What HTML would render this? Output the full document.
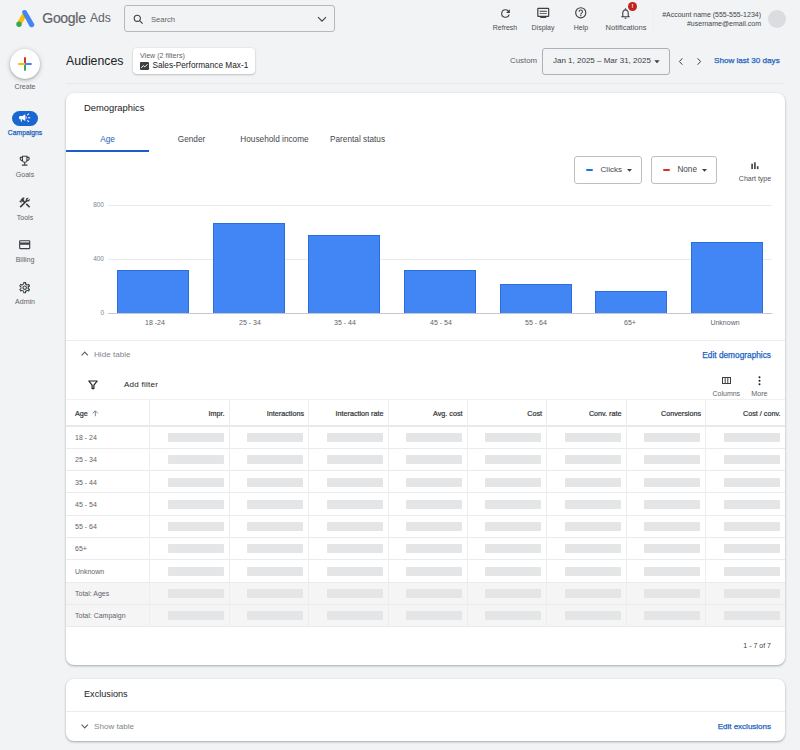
<!DOCTYPE html>
<html lang="en">
<head>
<meta charset="utf-8">
<title>Audiences - Google Ads</title>
<style>
*{box-sizing:border-box;margin:0;padding:0}
html,body{width:800px;height:750px;overflow:hidden}
body{background:#f1f3f4;font-family:"Liberation Sans",Arial,sans-serif;color:#3c4043;position:relative;font-size:8px}
.abs{position:absolute}
.med{font-weight:normal;-webkit-text-stroke:.25px currentColor}
.t{position:absolute;white-space:nowrap;line-height:1}
svg{position:absolute;overflow:visible}
.card{position:absolute;background:#fff;border-radius:8px;box-shadow:0 1px 2px rgba(60,64,67,.3),0 1px 3px rgba(60,64,67,.14)}
.navlbl{position:absolute;left:0;width:50px;text-align:center;font-size:7px;color:#5f6368;line-height:1}
.toplbl{position:absolute;font-size:7px;color:#4d5156;line-height:1;text-align:center;width:60px}
.btn{position:absolute;border:1px solid #bcbfc3;border-radius:3px;background:#fff}
.hl{position:absolute;height:1px;background:#ebebec}
.vl{position:absolute;width:1px;background:#ededee}
.ph{position:absolute;height:9px;width:56px;background:#e4e5e7;border-radius:1px}
.th{position:absolute;font-size:7.2px;-webkit-text-stroke:.22px currentColor;color:#33373a;line-height:1;white-space:nowrap;text-align:right}
.rl{position:absolute;left:75px;font-size:7px;color:#5f6368;line-height:1;white-space:nowrap}
.xl{position:absolute;font-size:7px;color:#5f6368;line-height:1;width:72px;text-align:center}
.bar{position:absolute;background:#4285f4;border:1px solid #2a6fdb;border-bottom:none}
</style>
</head>
<body>

<!-- ===== Top bar ===== -->
<svg style="left:14px;top:9px" width="22" height="20" viewBox="0 0 22 20">
  <path d="M2.8 14.3 L8.4 4.6 L12.4 6.9 L6.8 16.6 Z" fill="#fbbc04"/>
  <path d="M8.0 3.2 A2.6 2.6 0 0 1 12.6 1.9 L19.9 14.4 A2.6 2.6 0 0 1 15.4 17 Z" fill="#4285f4"/>
  <circle cx="5" cy="15.3" r="2.7" fill="#34a853"/>
</svg>
<div class="t" style="left:42.300px;top:10.800px;font-size:14px;color:#5f6368;letter-spacing:-.3px;-webkit-text-stroke:.2px #5f6368">Google</div>
<div class="t" style="left:90px;top:12.300px;font-size:12.2px;color:#5f6368;letter-spacing:-.1px">Ads</div>

<div class="abs" style="left:124px;top:5px;width:211px;height:27px;border:1px solid #b5b8bc;border-radius:3px;background:#f1f3f4"></div>
<svg style="left:132.500px;top:13.500px" width="11" height="11" viewBox="0 0 11 11"><circle cx="4.3" cy="4.3" r="3.1" fill="none" stroke="#3c4043" stroke-width="1.1"/><path d="M6.6 6.6 L9.6 9.6" stroke="#3c4043" stroke-width="1.2"/></svg>
<div class="t" style="left:151px;top:15.500px;font-size:7.600px;color:#5f6368">Search</div>
<svg style="left:317px;top:15.700px" width="10" height="7" viewBox="0 0 10 7"><path d="M1 1.2 L5 5.2 L9 1.2" fill="none" stroke="#3c4043" stroke-width="1.1"/></svg>

<!-- top actions -->
<svg style="left:498.5px;top:6.5px" width="13" height="13" viewBox="0 0 24 24"><path d="M17.65 6.35A7.96 7.96 0 0 0 12 4a8 8 0 1 0 7.73 10h-2.08A6 6 0 1 1 12 6c1.66 0 3.14.69 4.22 1.78L13 11h7V4l-2.35 2.35z" fill="#3c4043"/></svg>
<div class="toplbl" style="left:475px;top:24.400px">Refresh</div>
<svg style="left:536px;top:6px" width="14.5" height="14.5" viewBox="0 0 24 24"><path d="M20 3H4a2 2 0 0 0-2 2v11a2 2 0 0 0 2 2h3v2h10v-2h3a2 2 0 0 0 2-2V5a2 2 0 0 0-2-2zm0 13H4V5h16v11zM6 8h12v1.6H6zm0 3.4h12V13H6z" fill="#3c4043"/></svg>
<div class="toplbl" style="left:513px;top:24.400px">Display</div>
<svg style="left:574.3px;top:6.2px" width="13.5" height="13.5" viewBox="0 0 24 24"><path d="M11 18h2v-2h-2v2zm1-16a10 10 0 1 0 0 20 10 10 0 0 0 0-20zm0 18a8 8 0 1 1 0-16 8 8 0 0 1 0 16zm0-14a4 4 0 0 0-4 4h2c0-1.1.9-2 2-2s2 .9 2 2c0 2-3 1.75-3 5h2c0-2.25 3-2.5 3-5a4 4 0 0 0-4-4z" fill="#3c4043"/></svg>
<div class="toplbl" style="left:551px;top:24.400px">Help</div>
<svg style="left:618.7px;top:7px" width="13" height="13" viewBox="0 0 24 24"><path d="M12 22a2 2 0 0 0 2-2h-4a2 2 0 0 0 2 2zm6-6v-5c0-3.07-1.63-5.64-4.5-6.320V4a1.500 1.500 0 0 0-3 0v.68C7.640 5.360 6 7.920 6 11v5l-2 2v1h16v-1l-2-2zm-2 1H8v-6c0-2.480 1.510-4.500 4-4.500s4 2.020 4 4.500v6z" fill="#3c4043"/></svg>
<div class="abs" style="left:628px;top:2px;width:9px;height:9px;border-radius:50%;background:#c5221f;color:#fff;font-size:6px;line-height:9px;text-align:center;font-weight:bold">!</div>
<div class="toplbl" style="left:596px;top:24.200px;font-size:7.5px">Notifications</div>
<div class="vl" style="left:653px;top:8px;height:24px;background:#eceef0"></div>
<div class="t" style="right:39px;top:11px;font-size:7px;color:#44484c">#Account name (555-555-1234)</div>
<div class="t" style="right:39px;top:20px;font-size:7px;color:#44484c">#username@email.com</div>
<div class="abs" style="left:768px;top:10px;width:18px;height:18px;border-radius:50%;background:#dadce0"></div>

<!-- ===== Side nav ===== -->
<div class="abs" style="left:10px;top:49px;width:30px;height:30px;border-radius:50%;background:#fff;box-shadow:0 1px 2px rgba(60,64,67,.3),0 1px 4px 1px rgba(60,64,67,.18)"></div>
<svg style="left:18px;top:57px" width="14" height="14" viewBox="0 0 14 14">
  <rect x="6" y="0.300" width="2" height="6.700" fill="#d93025"/>
  <rect x="6" y="7" width="2" height="6.700" fill="#34a853"/>
  <rect x="0.300" y="6" width="6.700" height="2" fill="#fbbc04"/>
  <rect x="7" y="6" width="6.700" height="2" fill="#4285f4"/>
</svg>
<div class="navlbl" style="top:83px">Create</div>

<div class="abs" style="left:12px;top:110.5px;width:26px;height:15px;border-radius:7.5px;background:#1967d2"></div>
<svg style="left:18.30px;top:111.30px" width="13.4" height="13.4" viewBox="0 0 24 24"><path d="M18 11v2h4v-2h-4zm-2 6.610c.96.710 2.210 1.650 3.200 2.390.4-.53.800-1.070 1.200-1.600-.99-.74-2.240-1.680-3.200-2.400-.4.540-.8 1.080-1.200 1.610zM20.400 5.600c-.4-.53-.8-1.070-1.200-1.600-.99.740-2.240 1.680-3.200 2.400.4.530.8 1.070 1.200 1.600.96-.72 2.210-1.650 3.200-2.400zM4 9c-1.100 0-2 .9-2 2v2c0 1.100.9 2 2 2h1v4h2v-4h1l5 3V6L8 9H4zm11.500 3c0-1.330-.58-2.530-1.500-3.350v6.690c.92-.81 1.500-2.010 1.500-3.340z" fill="#fff"/></svg>
<div class="navlbl med" style="top:129.700px;color:#1c62c0;font-size:6.8px">Campaigns</div>

<svg style="left:18.30px;top:154.00px" width="13.4" height="13.4" viewBox="0 0 24 24"><path d="M19 5h-2V3H7v2H5c-1.100 0-2 .9-2 2v1c0 2.550 1.920 4.630 4.390 4.940A5.010 5.010 0 0 0 11 15.900V19H7v2h10v-2h-4v-3.100a5.010 5.010 0 0 0 3.610-2.960C19.080 12.630 21 10.550 21 8V7c0-1.100-.9-2-2-2zM5 8V7h2v3.820C5.840 10.400 5 9.300 5 8zm7 6c-1.650 0-3-1.350-3-3V5h6v6c0 1.650-1.350 3-3 3zm7-6c0 1.300-.84 2.400-2 2.820V7h2v1z" fill="#3c4043"/></svg>
<div class="navlbl" style="top:171px">Goals</div>

<svg style="left:18.40px;top:196.10px" width="13.4" height="13.4" viewBox="0 0 24 24"><path d="M13.783 15.172l2.121-2.121 5.996 5.996-2.121 2.121z" fill="#3c4043"/><path d="M17.500 10c1.930 0 3.500-1.570 3.500-3.500 0-.58-.16-1.120-.41-1.600l-2.700 2.700-1.490-1.490 2.700-2.700c-.48-.25-1.020-.41-1.600-.41C15.570 3 14 4.570 14 6.500c0 .41.080.8.210 1.160l-1.850 1.850-1.780-1.780.71-.71-1.410-1.410L12 3.490c-1.170-1.170-3.070-1.170-4.240 0L4.220 7.030l1.410 1.410H2.810l-.71.71 3.540 3.540.71-.71V9.150l1.410 1.410.71-.71 1.780 1.780-7.410 7.410 2.120 2.120L16.340 9.790c.36.130.75.210 1.160.210z" fill="#3c4043"/></svg>
<div class="navlbl" style="top:214px">Tools</div>

<svg style="left:18.20px;top:238.30px" width="13.4" height="13.4" viewBox="0 0 24 24"><path d="M20 4H4c-1.110 0-1.990.890-1.990 2L2 18c0 1.110.89 2 2 2h16c1.110 0 2-.89 2-2V6c0-1.110-.89-2-2-2zm0 14H4v-6h16v6zm0-10H4V6h16v2z" fill="#3c4043"/></svg>
<div class="navlbl" style="top:256px">Billing</div>

<svg style="left:18.30px;top:280.50px" width="13.4" height="13.4" viewBox="0 0 24 24"><path d="M19.430 12.980c.04-.32.070-.64.070-.98s-.03-.66-.07-.98l2.110-1.650c.19-.15.240-.42.120-.64l-2-3.460a.5.500 0 0 0-.61-.22l-2.490 1a7.300 7.300 0 0 0-1.690-.98l-.38-2.650A.488.488 0 0 0 14 2h-4c-.25 0-.46.180-.49.420l-.38 2.650c-.61.250-1.170.59-1.690.98l-2.490-1a.5.500 0 0 0-.61.220l-2 3.460c-.13.220-.07.490.12.640l2.110 1.650c-.04.320-.07.650-.07.980s.03.660.07.980l-2.110 1.650c-.19.150-.24.420-.12.640l2 3.460c.12.220.39.300.61.220l2.490-1c.52.400 1.080.73 1.690.98l.38 2.650c.03.240.24.420.49.420h4c.25 0 .46-.18.490-.42l.38-2.650c.61-.25 1.170-.59 1.690-.98l2.490 1c.23.090.49 0 .61-.22l2-3.460c.12-.22.070-.49-.12-.64l-2.110-1.650zm-1.980-1.710c.04.310.05.520.05.730s-.2.430-.5.730l-.14 1.130.89.700 1.080.84-.7 1.210-1.270-.51-1.040-.42-.9.680c-.43.320-.84.560-1.250.73l-1.060.43-.16 1.130-.2 1.350h-1.400l-.19-1.350-.16-1.130-1.060-.43c-.43-.18-.83-.41-1.230-.71l-.91-.7-1.060.43-1.270.51-.7-1.210 1.080-.84.890-.7-.14-1.130c-.03-.31-.05-.54-.05-.74s.02-.43.05-.73l.14-1.130-.89-.7-1.080-.84.7-1.210 1.270.51 1.040.42.900-.68c.43-.32.840-.56 1.250-.73l1.060-.43.160-1.130.2-1.350h1.390l.19 1.350.16 1.130 1.060.43c.43.180.83.410 1.230.71l.91.700 1.060-.43 1.270-.51.700 1.210-1.070.85-.89.700.14 1.130zM12 8c-2.210 0-4 1.790-4 4s1.790 4 4 4 4-1.790 4-4-1.790-4-4-4zm0 6c-1.100 0-2-.9-2-2s.9-2 2-2 2 .9 2 2-.9 2-2 2z" fill="#3c4043"/></svg>
<div class="navlbl" style="top:298px">Admin</div>

<!-- ===== Page header ===== -->
<div class="t" style="left:66px;top:55px;font-size:12.3px;color:#202124">Audiences</div>
<div class="abs" style="left:133px;top:48px;width:122px;height:26px;background:#fff;border-radius:4px;box-shadow:0 1px 2px rgba(60,64,67,.25),0 0 2px rgba(60,64,67,.12)"></div>
<div class="t" style="left:140px;top:52.5px;font-size:7.1px;color:#5f6368">View (2 filters)</div>
<svg style="left:140px;top:62px" width="9" height="8" viewBox="0 0 9 8"><rect x="0" y="0" width="9" height="8" rx="1" fill="#3c4043"/><path d="M1.300 5.800 L3.300 3.600 L4.800 4.900 L7.500 2.200" fill="none" stroke="#fff" stroke-width="1"/></svg>
<div class="t" style="left:152.4px;top:62px;font-size:8.25px;color:#202124">Sales-Performance Max-1</div>

<div class="t" style="left:510px;top:57px;font-size:7.9px;color:#5f6368">Custom</div>
<div class="btn" style="left:542px;top:48px;width:128px;height:27px;background:#f1f3f4;border-color:#adb0b4"></div>
<div class="t" style="left:553px;top:57px;font-size:8px;color:#3c4043">Jan 1, 2025 – Mar 31, 2025</div>
<svg style="left:653.7px;top:60px" width="6" height="4" viewBox="0 0 6 4"><path d="M0.300 0.300 H5.700 L3 3.300 Z" fill="#3c4043"/></svg>
<svg style="left:678px;top:57px" width="6" height="9" viewBox="0 0 6 9"><path d="M4.400 1.300 L1.400 4.500 L4.400 7.700" fill="none" stroke="#3c4043" stroke-width="1"/></svg>
<svg style="left:696px;top:57px" width="6" height="9" viewBox="0 0 6 9"><path d="M1.600 1.300 L4.600 4.500 L1.600 7.700" fill="none" stroke="#3c4043" stroke-width="1"/></svg>
<div class="t med" style="left:714px;top:57px;font-size:8.1px;color:#1c62c0">Show last 30 days</div>
<div class="hl" style="left:66px;top:83px;width:719px;background:#e6e8ea"></div>

<!-- ===== Demographics card ===== -->
<div class="card" style="left:66px;top:92.5px;width:719px;height:572px"></div>
<div class="t" style="left:84px;top:103.400px;font-size:9.4px;color:#202124">Demographics</div>

<div class="t" style="left:66px;width:83px;text-align:center;top:135.5px;font-size:8.25px;color:#1a5fc4">Age</div>
<div class="t" style="left:150px;width:83px;text-align:center;top:135.5px;font-size:8.25px;color:#44474a">Gender</div>
<div class="t" style="left:233px;width:83px;text-align:center;top:135.5px;font-size:8.25px;color:#44474a">Household income</div>
<div class="t" style="left:316px;width:83px;text-align:center;top:135.5px;font-size:8.25px;color:#44474a">Parental status</div>
<div class="abs" style="left:66px;top:150px;width:83px;height:2px;background:#1a5fc9"></div>

<div class="btn" style="left:574px;top:156px;width:68px;height:28px"></div>
<div class="abs" style="left:586px;top:169px;width:6.5px;height:2.4px;background:#1a73e8;border-radius:1px"></div>
<div class="t" style="left:600.5px;top:166.2px;font-size:8.1px;color:#44474a">Clicks</div>
<svg style="left:626.5px;top:168.700px" width="5" height="3" viewBox="0 0 5 3"><path d="M0 0 H5 L2.500 2.800 Z" fill="#3c4043"/></svg>
<div class="btn" style="left:651px;top:156px;width:66px;height:28px"></div>
<div class="abs" style="left:663px;top:169px;width:6.5px;height:2.4px;background:#d93025;border-radius:1px"></div>
<div class="t" style="left:677.4px;top:166.2px;font-size:8.2px;color:#44474a">None</div>
<svg style="left:701.5px;top:168.700px" width="5" height="3" viewBox="0 0 5 3"><path d="M0 0 H5 L2.500 2.800 Z" fill="#3c4043"/></svg>
<svg style="left:751px;top:161px" width="8" height="9" viewBox="0 0 8 9"><rect x="0.300" y="2.700" width="1.600" height="5.400" fill="#3c4043"/><rect x="3.100" y="1.300" width="1.600" height="6.800" fill="#3c4043"/><rect x="5.900" y="5.200" width="1.600" height="2.900" fill="#3c4043"/></svg>
<div class="t" style="left:725px;width:60px;text-align:center;top:175px;font-size:7px;color:#4d5156">Chart type</div>

<!-- chart -->
<div class="t" style="left:84px;width:20px;text-align:right;top:202px;font-size:6.500px;color:#80868b">800</div>
<div class="t" style="left:84px;width:20px;text-align:right;top:256px;font-size:6.500px;color:#80868b">400</div>
<div class="t" style="left:84px;width:20px;text-align:right;top:310px;font-size:6.500px;color:#80868b">0</div>
<div class="hl" style="left:108px;top:205px;width:664px;background:#e8eaed"></div>
<div class="hl" style="left:108px;top:259px;width:664px;background:#e8eaed"></div>
<div class="hl" style="left:108px;top:313px;width:664px;background:#c4c7cb"></div>
<div class="bar" style="left:117px;top:270px;width:72px;height:43px"></div>
<div class="bar" style="left:213px;top:223px;width:72px;height:90px"></div>
<div class="bar" style="left:308px;top:235px;width:72px;height:78px"></div>
<div class="bar" style="left:404px;top:270px;width:72px;height:43px"></div>
<div class="bar" style="left:499.5px;top:283.5px;width:72px;height:29.5px"></div>
<div class="bar" style="left:595px;top:291px;width:72px;height:22px"></div>
<div class="bar" style="left:691px;top:242px;width:72px;height:71px"></div>
<div class="xl" style="left:119px;top:319px">18 -24</div>
<div class="xl" style="left:214px;top:319px">25 - 34</div>
<div class="xl" style="left:309px;top:319px">35 - 44</div>
<div class="xl" style="left:405px;top:319px">45 - 54</div>
<div class="xl" style="left:500px;top:319px">55 - 64</div>
<div class="xl" style="left:594px;top:319px">65+</div>
<div class="xl" style="left:689px;top:319px">Unknown</div>

<div class="hl" style="left:66px;top:340px;width:719px;background:#ebecee"></div>
<svg style="left:80.800px;top:351.300px" width="7.500" height="5" viewBox="0 0 7.500 5"><path d="M0.600 4.300 L3.750 1.100 L6.900 4.300" fill="none" stroke="#5f6368" stroke-width="1.200"/></svg>
<div class="t" style="left:94px;top:350.700px;font-size:8.100px;color:#80868b">Hide table</div>
<div class="t med" style="right:29px;top:350.700px;font-size:8.3px;color:#1c62c0">Edit demographics</div>

<svg style="left:88.300px;top:379.500px" width="10" height="10" viewBox="0 0 10 10"><path d="M0.800 1 H9.200 L5.900 5.200 V8.600 H4.100 V5.200 Z" fill="none" stroke="#202124" stroke-width="1.200" stroke-linejoin="round"/></svg>
<div class="t" style="left:124px;top:380.800px;font-size:8px;letter-spacing:.26px;color:#202124">Add filter</div>
<svg style="left:722px;top:377px" width="9" height="7" viewBox="0 0 9 7"><rect x="0.500" y="0.500" width="8" height="6" fill="none" stroke="#3c4043" stroke-width="1"/><path d="M3.200 0.500 V6.500 M5.800 0.500 V6.500" stroke="#3c4043" stroke-width="1"/></svg>
<div class="t" style="left:706.300px;width:40px;text-align:center;top:389.800px;font-size:7px;color:#5f6368">Columns</div>
<svg style="left:758px;top:376px" width="3" height="10" viewBox="0 0 3 10"><circle cx="1.500" cy="1.300" r="1" fill="#202124"/><circle cx="1.500" cy="4.800" r="1" fill="#202124"/><circle cx="1.500" cy="8.300" r="1" fill="#202124"/></svg>
<div class="t" style="left:739.400px;width:40px;text-align:center;top:389.800px;font-size:7.200px;color:#5f6368">More</div>

<!-- table -->
<!--TBL-->
<div class="abs" style="left:66px;top:582.0px;width:719px;height:44.6px;background:#f5f5f6"></div>
<div class="hl" style="left:66px;top:399px;width:719px;background:#f0f0f1"></div>
<div class="hl" style="left:66px;top:425px;width:719px;height:2px;background:#e9e9ea"></div>
<div class="hl" style="left:66px;top:447.8px;width:719px"></div>
<div class="hl" style="left:66px;top:470.1px;width:719px"></div>
<div class="hl" style="left:66px;top:492.3px;width:719px"></div>
<div class="hl" style="left:66px;top:514.6px;width:719px"></div>
<div class="hl" style="left:66px;top:536.9px;width:719px"></div>
<div class="hl" style="left:66px;top:559.2px;width:719px"></div>
<div class="hl" style="left:66px;top:581.5px;width:719px"></div>
<div class="hl" style="left:66px;top:603.7px;width:719px"></div>
<div class="hl" style="left:66px;top:626.0px;width:719px"></div>
<div class="vl" style="left:149.0px;top:400px;height:226.5px"></div>
<div class="vl" style="left:228.5px;top:400px;height:226.5px"></div>
<div class="vl" style="left:308.0px;top:400px;height:226.5px"></div>
<div class="vl" style="left:387.5px;top:400px;height:226.5px"></div>
<div class="vl" style="left:466.5px;top:400px;height:226.5px"></div>
<div class="vl" style="left:546.0px;top:400px;height:226.5px"></div>
<div class="vl" style="left:625.5px;top:400px;height:226.5px"></div>
<div class="vl" style="left:705.0px;top:400px;height:226.5px"></div>
<div class="th" style="left:75px;top:410px;text-align:left">Age</div>
<svg style="left:92.200px;top:409.500px" width="6.600" height="6.600" viewBox="0 0 7 7"><path d="M3.500 6.600 V1 M0.800 3.600 L3.500 0.900 L6.200 3.600" fill="none" stroke="#6b7075" stroke-width="0.900"/></svg>
<div class="th" style="right:575.5px;top:410px">Impr.</div>
<div class="th" style="right:496.0px;top:410px">Interactions</div>
<div class="th" style="right:416.5px;top:410px">Interaction rate</div>
<div class="th" style="right:337.5px;top:410px">Avg. cost</div>
<div class="th" style="right:258.0px;top:410px">Cost</div>
<div class="th" style="right:178.5px;top:410px">Conv. rate</div>
<div class="th" style="right:99.0px;top:410px">Conversions</div>
<div class="th" style="right:19.5px;top:410px">Cost / conv.</div>
<div class="rl" style="top:434.0px">18 - 24</div>
<div class="ph" style="left:167.5px;top:433.0px"></div>
<div class="ph" style="left:247.0px;top:433.0px"></div>
<div class="ph" style="left:326.5px;top:433.0px"></div>
<div class="ph" style="left:405.5px;top:433.0px"></div>
<div class="ph" style="left:485.0px;top:433.0px"></div>
<div class="ph" style="left:564.5px;top:433.0px"></div>
<div class="ph" style="left:644.0px;top:433.0px"></div>
<div class="ph" style="left:723.5px;top:433.0px"></div>
<div class="rl" style="top:456.3px">25 - 34</div>
<div class="ph" style="left:167.5px;top:455.3px"></div>
<div class="ph" style="left:247.0px;top:455.3px"></div>
<div class="ph" style="left:326.5px;top:455.3px"></div>
<div class="ph" style="left:405.5px;top:455.3px"></div>
<div class="ph" style="left:485.0px;top:455.3px"></div>
<div class="ph" style="left:564.5px;top:455.3px"></div>
<div class="ph" style="left:644.0px;top:455.3px"></div>
<div class="ph" style="left:723.5px;top:455.3px"></div>
<div class="rl" style="top:478.6px">35 - 44</div>
<div class="ph" style="left:167.5px;top:477.6px"></div>
<div class="ph" style="left:247.0px;top:477.6px"></div>
<div class="ph" style="left:326.5px;top:477.6px"></div>
<div class="ph" style="left:405.5px;top:477.6px"></div>
<div class="ph" style="left:485.0px;top:477.6px"></div>
<div class="ph" style="left:564.5px;top:477.6px"></div>
<div class="ph" style="left:644.0px;top:477.6px"></div>
<div class="ph" style="left:723.5px;top:477.6px"></div>
<div class="rl" style="top:500.8px">45 - 54</div>
<div class="ph" style="left:167.5px;top:499.8px"></div>
<div class="ph" style="left:247.0px;top:499.8px"></div>
<div class="ph" style="left:326.5px;top:499.8px"></div>
<div class="ph" style="left:405.5px;top:499.8px"></div>
<div class="ph" style="left:485.0px;top:499.8px"></div>
<div class="ph" style="left:564.5px;top:499.8px"></div>
<div class="ph" style="left:644.0px;top:499.8px"></div>
<div class="ph" style="left:723.5px;top:499.8px"></div>
<div class="rl" style="top:523.1px">55 - 64</div>
<div class="ph" style="left:167.5px;top:522.1px"></div>
<div class="ph" style="left:247.0px;top:522.1px"></div>
<div class="ph" style="left:326.5px;top:522.1px"></div>
<div class="ph" style="left:405.5px;top:522.1px"></div>
<div class="ph" style="left:485.0px;top:522.1px"></div>
<div class="ph" style="left:564.5px;top:522.1px"></div>
<div class="ph" style="left:644.0px;top:522.1px"></div>
<div class="ph" style="left:723.5px;top:522.1px"></div>
<div class="rl" style="top:545.4px">65+</div>
<div class="ph" style="left:167.5px;top:544.4px"></div>
<div class="ph" style="left:247.0px;top:544.4px"></div>
<div class="ph" style="left:326.5px;top:544.4px"></div>
<div class="ph" style="left:405.5px;top:544.4px"></div>
<div class="ph" style="left:485.0px;top:544.4px"></div>
<div class="ph" style="left:564.5px;top:544.4px"></div>
<div class="ph" style="left:644.0px;top:544.4px"></div>
<div class="ph" style="left:723.5px;top:544.4px"></div>
<div class="rl" style="top:567.7px">Unknown</div>
<div class="ph" style="left:167.5px;top:566.7px"></div>
<div class="ph" style="left:247.0px;top:566.7px"></div>
<div class="ph" style="left:326.5px;top:566.7px"></div>
<div class="ph" style="left:405.5px;top:566.7px"></div>
<div class="ph" style="left:485.0px;top:566.7px"></div>
<div class="ph" style="left:564.5px;top:566.7px"></div>
<div class="ph" style="left:644.0px;top:566.7px"></div>
<div class="ph" style="left:723.5px;top:566.7px"></div>
<div class="rl" style="top:590.0px">Total: Ages</div>
<div class="ph" style="left:167.5px;top:589.0px"></div>
<div class="ph" style="left:247.0px;top:589.0px"></div>
<div class="ph" style="left:326.5px;top:589.0px"></div>
<div class="ph" style="left:405.5px;top:589.0px"></div>
<div class="ph" style="left:485.0px;top:589.0px"></div>
<div class="ph" style="left:564.5px;top:589.0px"></div>
<div class="ph" style="left:644.0px;top:589.0px"></div>
<div class="ph" style="left:723.5px;top:589.0px"></div>
<div class="rl" style="top:612.2px">Total: Campaign</div>
<div class="ph" style="left:167.5px;top:611.2px"></div>
<div class="ph" style="left:247.0px;top:611.2px"></div>
<div class="ph" style="left:326.5px;top:611.2px"></div>
<div class="ph" style="left:405.5px;top:611.2px"></div>
<div class="ph" style="left:485.0px;top:611.2px"></div>
<div class="ph" style="left:564.5px;top:611.2px"></div>
<div class="ph" style="left:644.0px;top:611.2px"></div>
<div class="ph" style="left:723.5px;top:611.2px"></div>
<!--/TBL-->

<div class="t" style="right:29px;top:642px;font-size:7px;color:#3c4043">1 - 7 of 7</div>

<!-- ===== Exclusions card ===== -->
<div class="card" style="left:66px;top:679px;width:719px;height:62px"></div>
<div class="t" style="left:84px;top:690px;font-size:9.15px;color:#202124">Exclusions</div>
<div class="hl" style="left:66px;top:711px;width:719px;background:#ebecee"></div>
<svg style="left:80.800px;top:723.700px" width="7.500" height="5" viewBox="0 0 7.500 5"><path d="M0.600 0.700 L3.750 3.900 L6.900 0.700" fill="none" stroke="#5f6368" stroke-width="1.200"/></svg>
<div class="t" style="left:94px;top:722.700px;font-size:8.100px;color:#80868b">Show table</div>
<div class="t med" style="right:29px;top:722.5px;font-size:8px;color:#1c62c0">Edit exclusions</div>

</body>
</html>
